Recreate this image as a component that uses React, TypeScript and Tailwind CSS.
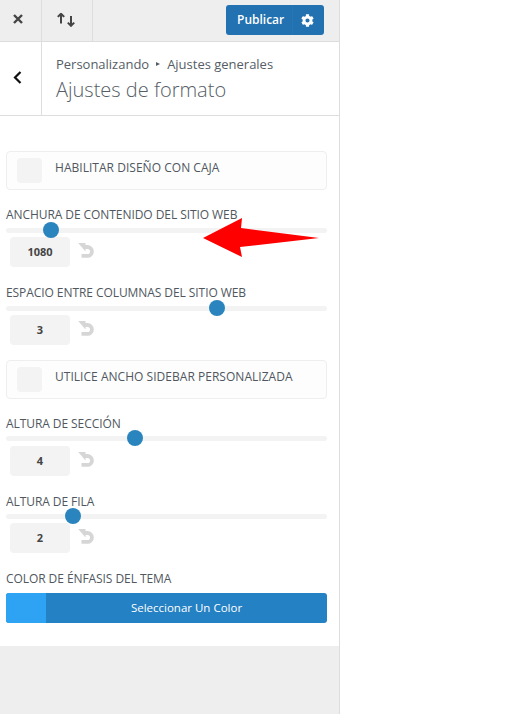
import { FaCog } from "react-icons/fa";

const font = "font-['Open_Sans',sans-serif]";

function ResetIcon() {
  return (
    <svg width="16" height="16" viewBox="0 0 16 16" fill="none" className="ml-2 mt-1.5">
      <path d="M5 4 H9.5 A4.2 4.2 0 0 1 9.5 12.9 H3.5" stroke="#d6d6d6" strokeWidth="3.8" />
      <path d="M0.2 0 L7.5 0 L7.5 8.5 Z" fill="#d6d6d6" />
    </svg>
  );
}

function Slider({
  label,
  value,
  thumb,
  trackGap = "mt-[3px]",
  inputGap = "mt-[4px]",
}: {
  label: string;
  value: string;
  thumb: number;
  trackGap?: string;
  inputGap?: string;
}) {
  return (
    <div>
      <div className="h-[20px] text-[12px] leading-[20px] tracking-[-0.07px] text-[#50575e]">{label}</div>
      <div className={`relative h-[5px] rounded-full bg-[#f3f3f3] ${trackGap}`}>
        <div
          className="absolute top-[-6px] h-4 w-4 rounded-full bg-[#2a84bd]"
          style={{ left: thumb - 14 }}
        />
      </div>
      <div className={`ml-1 flex ${inputGap}`}>
        <div className="flex h-[30px] w-[60px] items-center justify-center rounded bg-[#f3f3f3] text-[11px] font-bold text-[#444]">
          {value}
        </div>
        <ResetIcon />
      </div>
    </div>
  );
}

function CheckRow({ label }: { label: string }) {
  return (
    <div className="flex h-[39px] items-start rounded-sm border border-[#eeeeee] bg-[#fdfdfd] pl-[10px] pt-[6px]">
      <div className="h-[25px] w-[25px] rounded bg-[#f3f3f3]" />
      <div className="ml-[13px] text-[12px] leading-[20px] tracking-[0.03px] text-[#50575e]">{label}</div>
    </div>
  );
}

export default function App() {
  return (
    <div className={`${font} h-[714px] w-[510px] overflow-hidden bg-white`}>
      <div className="relative flex h-[714px] w-[340px] flex-col border-r border-[#dddddd] bg-[#eeeeee]">
        <div className="flex h-[42px] border-b border-[#dddddd]">
          <div className="flex w-[42px] items-start border-r border-[#dddddd] pl-[13px] pt-[14px]">
            <svg width="10" height="10" viewBox="0 0 10 10" fill="none" stroke="#444" strokeWidth="2.4">
              <path d="M1 1 9 9M9 1 1 9" />
            </svg>
          </div>
          <div className="flex w-[51px] items-start border-r border-[#dddddd] pl-[15px] pt-[13px]">
            <svg width="20" height="14" viewBox="0 0 20 14" fill="none" stroke="#444" strokeWidth="2">
              <path d="M4 10.5V1M0.8 3.9 4 0.7 7.2 3.9" />
              <path d="M14 3V12.5M10.8 9.6 14 12.8 17.2 9.6" />
            </svg>
          </div>
          <div className="ml-auto mr-[15px] mt-[5px] flex h-[30px] w-[98px] items-center rounded-[3px] bg-[#2271b1] text-white">
            <span className="ml-[11px] w-[56px] border-r border-[#2676b6] text-[12px] font-semibold leading-[30px]">Publicar</span>
            <FaCog size={13} className="ml-[8px]" />
          </div>
        </div>

        <div className="flex h-[74px] border-b border-[#dddddd] bg-white">
          <div className="flex w-[42px] items-center border-r border-[#dddddd] pb-[2px] pl-[13px]">
            <svg width="9" height="13" viewBox="0 0 9 13" fill="none" stroke="#111" strokeWidth="2.2">
              <path d="M7.5 1 2 6.5 7.5 12" />
            </svg>
          </div>
          <div className="pl-[14px] pt-[13px]">
            <div className="flex items-center text-[13px] leading-[18px] tracking-[-0.01px] text-[#555d66]">
              Personalizando
              <span className="mx-[7px] h-0 w-0 border-y-[2.5px] border-l-[4px] border-y-transparent border-l-[#555d66]" />
              Ajustes generales
            </div>
            <div className="mt-[4px] text-[20px] font-light leading-[26px] text-[#555d66]">Ajustes de formato</div>
          </div>
        </div>

        <div className="h-[530px] bg-white pl-[6px] pr-[12px] pt-[35px]">
          <CheckRow label="HABILITAR DISEÑO CON CAJA" />
          <div className="mt-[15px]">
            <Slider label="ANCHURA DE CONTENIDO DEL SITIO WEB" value="1080" thumb={51} />
          </div>
          <div className="mt-[16px]">
            <Slider label="ESPACIO ENTRE COLUMNAS DEL SITIO WEB" value="3" thumb={217} />
          </div>
          <div className="mt-[15px]">
            <CheckRow label="UTILICE ANCHO SIDEBAR PERSONALIZADA" />
          </div>
          <div className="mt-[15px]">
            <Slider label="ALTURA DE SECCIÓN" value="4" thumb={135} trackGap="mt-[2px]" inputGap="mt-[5px]" />
          </div>
          <div className="mt-[16px]">
            <Slider label="ALTURA DE FILA" value="2" thumb={73} trackGap="mt-[2px]" />
          </div>
          <div className="mt-[16px] h-[20px] text-[12px] leading-[20px] tracking-[-0.07px] text-[#50575e]">COLOR DE ÉNFASIS DEL TEMA</div>
          <div className="mt-[4px] flex h-[30px] overflow-hidden rounded-[3px] bg-[#2481c3]">
            <div className="w-10 bg-[#2ea2f3]" />
            <div className="flex-1 text-center text-[11.5px] leading-[30px] text-white">Seleccionar Un Color</div>
          </div>
        </div>

        <svg width="130" height="50" viewBox="0 0 130 50" className="absolute left-[200px] top-[213px]">
          <path d="M3 25 42 5 41 15 119 25 40 34 42 44Z" fill="#ff0000" />
        </svg>
      </div>
    </div>
  );
}
